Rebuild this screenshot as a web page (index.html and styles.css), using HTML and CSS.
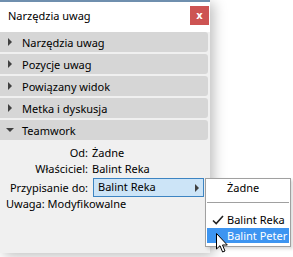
FILE: index.html
```html
<!DOCTYPE html>
<html lang="pl">
  <head>
    <meta charset="UTF-8" />
    <title>Narzędzia uwag</title>
    <link rel="stylesheet" href="styles.css">
  </head>
  <body>
    <div class="panel">
      <div class="title-bar">
        <span class="title">Narzędzia uwag</span>
        <button class="close-btn">x</button>
      </div>

      <div class="sections">
        <div class="section-head"><span class="arrow right"></span>Narzędzia uwag</div>
        <div class="section-head"><span class="arrow right"></span>Pozycje uwag</div>
        <div class="section-head"><span class="arrow right"></span>Powiązany widok</div>
        <div class="section-head"><span class="arrow right"></span>Metka i dyskusja</div>
        <div class="section-head"><span class="arrow down"></span>Teamwork</div>

        <!-- Teamwork -->
        <div class="teamwork">
          <div class="row"><span class="label">Od:</span><span class="value">Żadne</span></div>
          <div class="row"><span class="label">Właściciel:</span><span class="value">Balint Reka</span></div>
          <div class="row select-row">
            <span class="label">Przypisanie do:</span>
            <span class="dropdown">Balint Reka<span class="dd-arrow"></span></span>
          </div>
          <div class="note">Uwaga: Modyfikowalne</div>
        </div>
      </div>
    </div>

    <!-- Menu podrzędne -->
    <div class="menu">
      <div class="menu-item">Żadne</div>
      <div class="menu-sep"></div>
      <div class="menu-item checked">
        <svg class="check" width="12" height="10" viewBox="0 0 12 10">
          <path d="M1 5.5 L4.2 8.5 L11 1" fill="none" stroke="#222" stroke-width="1.6" />
        </svg>
        Balint Reka
      </div>
      <div class="menu-item active">Balint Peter</div>
    </div>

    <svg class="cursor" width="13" height="21" viewBox="0 0 13 21">
      <path d="M0.5 0.5 L0.5 16 L4 12.7 L6.6 19 L9 18 L6.5 12 L11.3 12 Z" fill="#fff" stroke="#000" stroke-width="1" stroke-linejoin="round" />
    </svg>
  </body>
</html>
```

FILE: styles.css
```css
* {
  margin: 0;
  padding: 0;
  box-sizing: border-box;
}

body {
  background: #ffffff;
  font-family: "Noto Sans", "Open Sans", sans-serif;
  font-size: 11px;
  color: #000;
  width: 293px;
  height: 257px;
  overflow: hidden;
  position: relative;
}

.panel {
  width: 210px;
  height: 253px;
  background: #f0f0f0;
  border-top: 2px solid #6f8fae;
  box-shadow: 4px 3px 12px rgba(0, 0, 0, 0.25);
}

.title-bar {
  height: 30px;
  background: #ffffff;
  display: flex;
  align-items: center;
  justify-content: space-between;
  padding: 0 1px 0 8px;
}

.title {
  margin-top: -3px;
}

.close-btn {
  width: 19px;
  height: 19px;
  border: none;
  background: #cd5453;
  color: #fff;
  font-family: "DejaVu Sans", sans-serif;
  font-weight: bold;
  font-size: 10px;
  line-height: 17px;
  margin-top: -4px;
}

.section-head {
  height: 20px;
  margin-bottom: 2px;
  margin-right: 2px;
  background: #d6d6d6;
  border-radius: 0 3px 3px 0;
  display: flex;
  align-items: center;
  padding-left: 8px;
}

.arrow {
  width: 0;
  height: 0;
  margin-right: 10px;
}

.arrow.right {
  border-top: 4px solid transparent;
  border-bottom: 4px solid transparent;
  border-left: 4px solid #404040;
}

.arrow.down {
  border-left: 4px solid transparent;
  border-right: 4px solid transparent;
  border-top: 4px solid #404040;
  margin-left: -2px;
  margin-right: 8px;
}

.teamwork {
  padding-top: 2px;
}

.row {
  display: flex;
  align-items: center;
  height: 16px;
}

.select-row {
  height: 19px;
  margin-top: 2px;
}

.label {
  width: 92px;
  text-align: right;
  padding-right: 4px;
}

.dropdown {
  position: relative;
  width: 111px;
  height: 19px;
  margin-left: 1px;
  background: #cce4f7;
  border: 1px solid #3d84c2;
  padding-left: 4px;
  line-height: 16px;
}

.dd-arrow {
  position: absolute;
  right: 4px;
  top: 5px;
  border-top: 4px solid transparent;
  border-bottom: 4px solid transparent;
  border-left: 4px solid #404040;
}

.note {
  padding-left: 6px;
  line-height: 16px;
  margin-top: -1px;
}

/* Menu podrzędne */
.menu {
  position: absolute;
  left: 205px;
  top: 178px;
  width: 86px;
  height: 69px;
  background: #fff;
  border: 1px solid #a0a0a0;
  box-shadow: 2px 2px 3px rgba(0, 0, 0, 0.15);
  padding: 0 1px;
}

.menu-item {
  position: relative;
  height: 18px;
  line-height: 18px;
  padding-left: 20px;
  white-space: nowrap;
  color: #000;
}

.menu-sep {
  height: 1px;
  background: #a0a0a0;
  margin: 5px 0 9px;
}

.check {
  position: absolute;
  left: 5px;
  top: 3px;
}

.menu-item.checked {
  height: 16px;
  line-height: 16px;
}

.menu-item.active {
  background: #3d95f1;
  color: #fff;
  height: 15px;
  line-height: 15px;
}

.cursor {
  position: absolute;
  left: 216px;
  top: 233px;
}
```
